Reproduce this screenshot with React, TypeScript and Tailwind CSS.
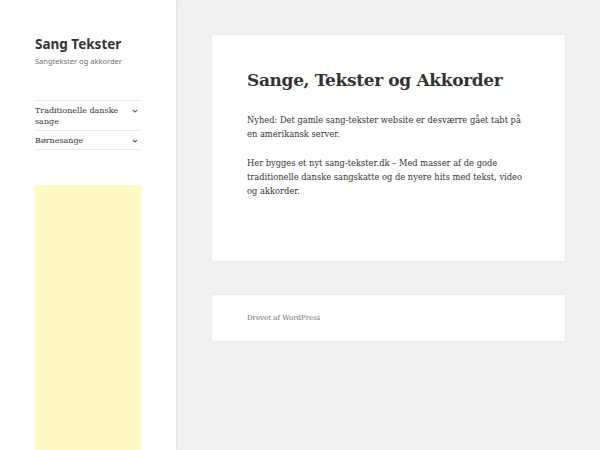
import React from "react";

const Chevron = () => (
  <svg width="6" height="4" viewBox="0 0 10 7" className="mt-[4px] mr-[3px] shrink-0">
    <path d="M1 1.5 L5 5.5 L9 1.5" fill="none" stroke="#555" strokeWidth="1.8" />
  </svg>
);

export default function App() {
  const serif = { fontFamily: '"DejaVu Serif", "Liberation Serif", serif' };
  return (
    <div className="flex w-[600px] h-[450px] bg-[#f1f1f1] overflow-hidden">
      <aside className="w-[176px] h-full bg-white shadow-[0_0_2px_rgba(0,0,0,0.15)] shrink-0 flex flex-col px-[35px] pt-[35px]">
        <div className="text-[13.5px] font-bold text-[#333] leading-[18px]" style={{ fontFamily: '"Noto Sans", sans-serif' }}>
          Sang Tekster
        </div>
        <div className="text-[7.5px] text-[#707070] mt-[3px] leading-[10px]" style={{ fontFamily: '"Noto Sans", sans-serif' }}>
          Sangtekster og akkorder
        </div>
        <nav className="mt-[34px] border-t border-[#eaeaea]" style={serif}>
          <div className="flex justify-between border-b border-[#eaeaea] pt-[4px] pb-[3px]">
            <span className="text-[8px] leading-[11px] text-[#333] w-[85px]">Traditionelle danske sange</span>
            <Chevron />
          </div>
          <div className="flex justify-between border-b border-[#eaeaea] pt-[4px] pb-[3px]">
            <span className="text-[8px] leading-[11px] text-[#333]">Børnesange</span>
            <Chevron />
          </div>
        </nav>
        <div className="mt-[35px] flex-1 bg-[#fff9c3]" />
      </aside>
      <main className="flex-1 pl-[36px] pr-[35px] pt-[35px] flex flex-col gap-[34px]" style={serif}>
        <article className="bg-white shadow-[0_0_1px_rgba(0,0,0,0.15)] px-[35px] pt-[32px] h-[226px]">
          <h1 className="text-[17px] tracking-[-0.35px] font-bold text-[#333] leading-[26px] whitespace-nowrap">Sange, Tekster og Akkorder</h1>
          <div className="mt-[20px] text-[8.3px] leading-[14px] text-[#333]">
            <p>Nyhed: Det gamle sang-tekster website er desværre gået tabt på en amerikansk server.</p>
            <p className="mt-[15px]">Her bygges et nyt sang-tekster.dk – Med masser af de gode traditionelle danske sangskatte og de nyere hits med tekst, video og akkorder.</p>
          </div>
        </article>
        <footer className="bg-white shadow-[0_0_1px_rgba(0,0,0,0.15)] px-[35px] h-[46px] flex items-center">
          <span className="text-[7px] text-[#707070]">Drevet af WordPress</span>
        </footer>
      </main>
    </div>
  );
}
